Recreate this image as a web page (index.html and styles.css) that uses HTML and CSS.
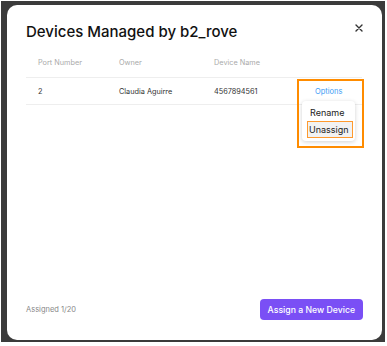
FILE: index.html
```html
<!DOCTYPE html>
<html lang="en">
<head>
    <meta charset="UTF-8">
    <title>Devices Managed by b2_rove</title>
    <link rel="stylesheet" href="styles.css">
</head>
<body>

    <div class="backdrop">
        <div class="modal">
            <div class="modal-head">
                <h2>Devices Managed by b2_rove</h2>
                <button class="close-btn" aria-label="Close">
                    <svg width="8" height="8" viewBox="0 0 8 8">
                        <path d="M1 1L7 7M7 1L1 7" stroke="#333" stroke-width="1.4" stroke-linecap="round"/>
                    </svg>
                </button>
            </div>

            <!-- Devices table -->
            <div class="table">
                <div class="row head-row">
                    <div class="cell">Port Number</div>
                    <div class="cell">Owner</div>
                    <div class="cell">Device Name</div>
                    <div class="cell"></div>
                </div>
                <div class="row">
                    <div class="cell">2</div>
                    <div class="cell">Claudia Aguirre</div>
                    <div class="cell">4567894561</div>
                    <div class="cell options-cell">
                        <a class="options-link">Options</a>
                        <div class="highlight"></div>
                        <div class="menu">
                            <div class="menu-item">Rename</div>
                            <div class="menu-item active">Unassign</div>
                        </div>
                    </div>
                </div>
            </div>

            <div class="modal-foot">
                <span class="count">Assigned 1/20</span>
                <button class="assign-btn">Assign a New Device</button>
            </div>
        </div>
    </div>

</body>
</html>
```

FILE: styles.css
```css
* {
    margin: 0;
    padding: 0;
    box-sizing: border-box;
}

body {
    font-family: Inter, 'Noto Sans', sans-serif;
    background: #fff;
    color: #222;
}

/* Dark overlay behind the modal */
.backdrop {
    width: 384px;
    height: 341px;
    margin: 1px 0 0 1px;
    padding: 4px 3px 2px 6px;
    background: #3b3b3b;
}

.modal {
    height: 100%;
    background: #fff;
    border-radius: 10px;
    padding: 16px 20px 20px 19px;
    display: flex;
    flex-direction: column;
}

.modal-head {
    display: flex;
    justify-content: space-between;
    align-items: flex-start;
}

.modal-head h2 {
    font-size: 15px;
    font-weight: 500;
    line-height: 22px;
    color: #111;
}

.close-btn {
    display: flex;
    border: none;
    background: none;
    margin-top: 3px;
    margin-right: -1px;
    cursor: pointer;
}

/* Table */
.table {
    margin-top: 5px;
}

.row {
    display: grid;
    grid-template-columns: 81px 95px 88px 1fr;
    align-items: center;
    height: 27px;
    border-bottom: 1px solid #eee;
    font-size: 7.3px;
    color: #333;
}

.head-row {
    height: 30px;
    color: #aaa;
}

.cell {
    padding-left: 12px;
}

.options-cell {
    position: relative;
    height: 100%;
    display: flex;
    align-items: center;
    padding-left: 25px;
}

.options-link {
    color: #3b9cf5;
    font-size: 7.5px;
    cursor: pointer;
}

.highlight {
    position: absolute;
    left: 7px;
    top: 1px;
    width: 67px;
    height: 69px;
    border: 2px solid #ff8c00;
}

.menu {
    position: absolute;
    left: 12px;
    top: 23px;
    width: 53px;
    height: 40px;
    background: #fff;
    border-radius: 4px;
    box-shadow: 0 1px 4px rgba(0, 0, 0, 0.18);
    padding: 3px 2px;
}

.menu-item {
    font-size: 9px;
    color: #222;
    height: 17px;
    line-height: 15px;
    padding-left: 5px;
    border: 1.5px solid transparent;
}

.menu-item.active {
    margin-left: 3px;
    padding-left: 1px;
    background: #f2f2f2;
    border-color: #ff9a2e;
}

/* Footer */
.modal-foot {
    margin-top: auto;
    display: flex;
    justify-content: space-between;
    align-items: center;
}

.count {
    font-size: 7.5px;
    color: #888;
}

.assign-btn {
    font-family: Inter, 'Noto Sans', sans-serif;
    font-size: 8.7px;
    font-weight: 500;
    color: #fff;
    background: #7a4ff5;
    border: none;
    border-radius: 4px;
    height: 21px;
    padding: 0 8px;
    margin-right: -1px;
    cursor: pointer;
}
```
